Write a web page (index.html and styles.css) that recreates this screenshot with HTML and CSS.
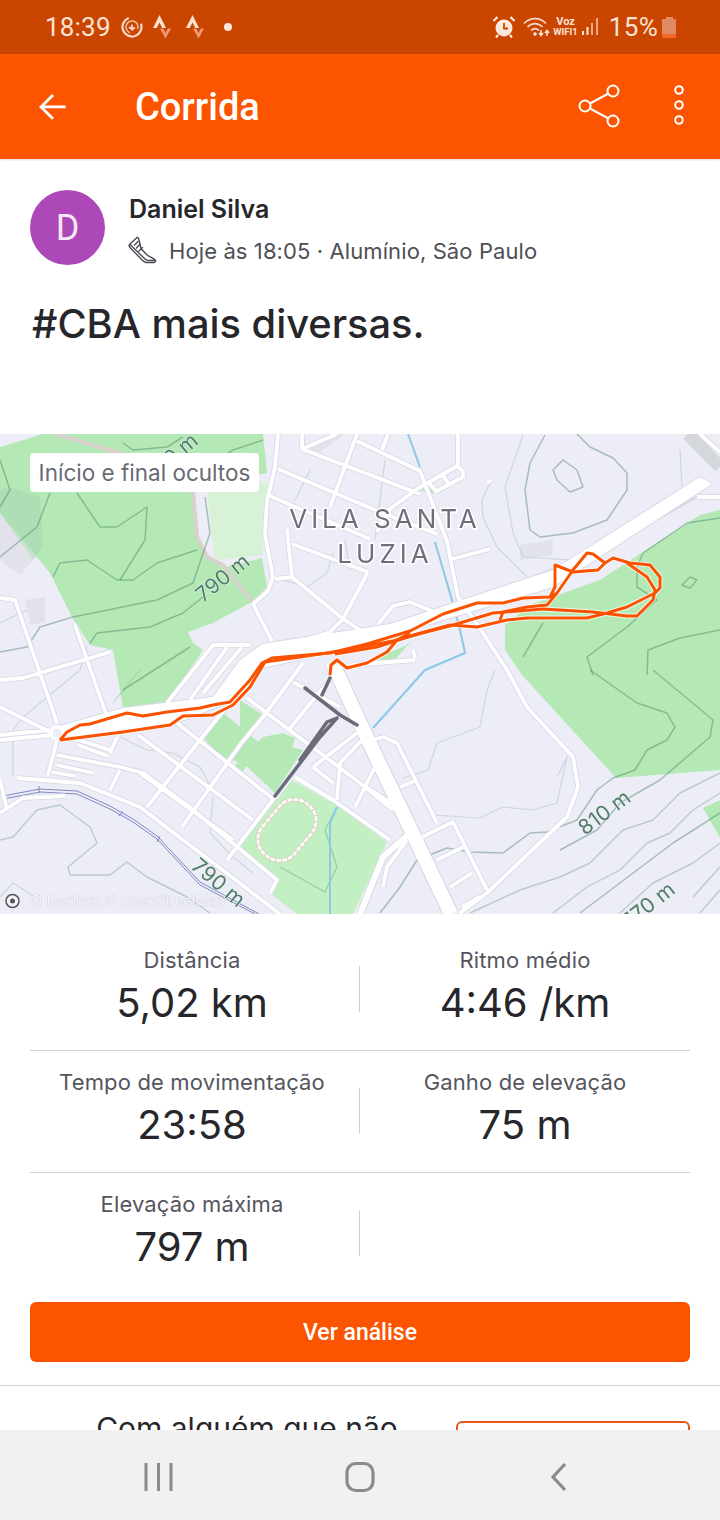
FILE: index.html
```html
<!DOCTYPE html>
<html lang="pt-BR">
<head>
<meta charset="utf-8">
<title>Corrida</title>
<link rel="stylesheet" href="styles.css">
</head>
<body>
<div class="screen">
  <div class="statusbar">
    <div class="status-left">
      <span class="clock">18:39</span>
      <svg class="st-icon" width="22" height="22" viewBox="0 0 22 22"><path d="M11 1.500a9.500 9.500 0 1 1-9.500 9.500" fill="none" stroke="#f7d8c6" stroke-width="2.200" transform="rotate(70 11 11)"/><path d="M11 5a6 6 0 1 1-6 6" fill="none" stroke="#f7d8c6" stroke-width="1.600" opacity=".8" transform="rotate(200 11 11)"/><path d="M8 11l3 2.400V8.500M11 13.400l3-2" fill="none" stroke="#f7d8c6" stroke-width="1.800"/></svg>
      <svg class="st-icon st-gap" width="18" height="24" viewBox="0 0 18 24"><path d="M0 13L6.500 0 13 13H9.300L6.500 7.500 3.700 13z" fill="#fde3d4"/><path d="M7 13.500h3.200l2.300 4.500 2.300-4.500H18l-5.500 10z" fill="#ee9a74"/></svg>
      <svg class="st-icon st-gap2" width="18" height="24" viewBox="0 0 18 24"><path d="M0 13L6.500 0 13 13H9.300L6.500 7.500 3.700 13z" fill="#fde3d4"/><path d="M7 13.500h3.200l2.300 4.500 2.300-4.500H18l-5.500 10z" fill="#ee9a74"/></svg>
      <span class="dot"></span>
    </div>
    <div class="status-right">
      <svg width="24" height="24" viewBox="0 0 24 24"><circle cx="12" cy="13" r="8.500" fill="#fde8dc"/><path d="M12 8v5.500h4" fill="none" stroke="#c94500" stroke-width="1.800"/><path d="M1.500 6l4-4M22.500 6l-4-4M6 20l-2 2.500M18 20l2 2.500" stroke="#fde8dc" stroke-width="2.200" fill="none"/></svg>
      <svg class="wifi" width="28" height="22" viewBox="0 0 28 22"><g fill="none" stroke="#f6d5c3" stroke-width="1.700"><path d="M1 7.500C7 1 17 1 23 7.500"/><path d="M4.500 11C9 6.500 15 6.500 19.500 11"/><path d="M8 14.500c2.500-2.500 5.500-2.500 8 0"/></g><circle cx="12" cy="18" r="1.800" fill="#fde8dc"/><path d="M18 14v5m-2-2l2 2.500 2-2.500M24 20v-5m-2 2l2-2.500 2 2.500" stroke="#fde8dc" stroke-width="1.500" fill="none"/></svg>
      <span class="voz"><span>Voz</span><span>WIFI1</span></span>
      <svg class="signal" width="19" height="20" viewBox="0 0 19 20"><g fill="#fde8dc"><rect x="1" y="14" width="2" height="4"/><rect x="5.500" y="10" width="2" height="8"/></g><g fill="#f2a887"><rect x="10" y="6" width="2" height="12"/><rect x="15" y="1" width="2" height="17"/></g></svg>
      <span class="pct">15%</span>
      <span class="battery"><span class="battery-cap"></span><span class="battery-body"></span></span>
    </div>
  </div>

  <header class="appbar">
    <svg class="back" width="34" height="34" viewBox="0 0 34 34"><path d="M32 17H3M17 3L3 17l14 14" fill="none" stroke="#fff" stroke-width="3.300" transform="translate(2.500 2.500) scale(.85)"/></svg>
    <h1 class="title">Corrida</h1>
    <svg class="share" width="44" height="48" viewBox="0 0 44 48"><g fill="none" stroke="#fff" stroke-width="2"><circle cx="35" cy="9" r="5.500"/><circle cx="7" cy="24" r="5.500"/><circle cx="35" cy="39" r="5.500"/><path d="M12 21.500L30.500 11.500M12 26.500L30.500 36.500"/></g></svg>
    <svg class="more" width="12" height="42" viewBox="0 0 12 42"><g fill="none" stroke="#fff" stroke-width="2"><circle cx="6" cy="6" r="3.800"/><circle cx="6" cy="21" r="3.800"/><circle cx="6" cy="36" r="3.800"/></g></svg>
  </header>

  <main class="content">
    <section class="author">
      <div class="avatar">D</div>
      <div class="author-meta">
        <div class="name">Daniel Silva</div>
        <div class="meta">
          <svg class="shoe" width="30" height="30" viewBox="0 0 30 30"><g fill="none" stroke="#4a4a52" stroke-width="1.400" stroke-linejoin="round" stroke-linecap="round"><path d="M9 1.500L2 8C1 9 1 10.500 2 11.500L14 24C15.500 25.500 17 26.500 19 26.500H26C27.500 26.500 28 25 27 24C25 21.500 21 21 18.500 18.500L13 12.500 11 4C10.500 2 10 1 9 1.500Z"/><path d="M2 8.500L17 23C18 24 20 24.500 21 24.500H27.500M10 5.500L6.500 9M12 8.500L8.500 12M14.500 11.500L11 15"/></g></svg>
          <span>Hoje às 18:05 · Alumínio, São Paulo</span>
        </div>
      </div>
    </section>
    <h2 class="activity-title">#CBA mais diversas.</h2>

    <section class="map">
      <svg class="map-svg" viewBox="0 434 720 480" width="720" height="480">
        <defs>
          <path id="minor" d="M278 434L275 467 267 501 265 534 273 577 268 591 253 604M253 604L272 641M357 441L420 471 430 497 447 541 458 597 481 630 507 670 527 707 573 757 578 787 567 817 487 893 460 913M302 434L302 449 420 494M302 449L337 434M278 469L380 512 437 534M270 496L370 539M292 544L368 572M287 529L292 577 275 579M292 577L343 619 360 630M368 572L343 619 330 632 300 642M357 434L330 507M388 434L382 450M463 471L457 466 417 489 390 509 377 532M428 482L437 492M442 474L450 486M463 477L435 492M458 434V466M463 471V477M490 549L452 559M378 624L393 606 410 602 432 611M700 434L720 452M720 497H697M0 598L15 600 57 723M75 625L107 717M0 680L23 678 110 652M0 707L50 732M0 735L50 730M0 740L53 735M57 740L48 775M17 778L80 783 140 807 280 914M57 755L120 767 143 773 187 805 277 880 270 893M57 765L93 773M52 772L75 776M120 770L110 790M117 737L110 753M72 738L110 750M78 745L108 756M138 735L253 820M177 723L272 798M247 698L360 783 397 807M140 773L233 840M147 807L200 740 240 690M303 663L263 717 240 745 182 827M275 797L227 860M167 703L213 645H250M190 700L227 647M203 693L242 647M290 728L327 683M313 767L357 733M313 767L333 783M295 777L333 800 390 840M337 800L340 763 362 740M355 807L375 767M363 743L383 737 397 743 437 823M400 787L417 780M360 783L393 810M422 837L453 822 487 890M437 860L463 847M450 887L472 873M462 907L480 897M383 887L387 867 407 840M0 813L23 798 65 796M0 780L7 810M350 665L415 660M413 650L415 658M487 483L491 480M293 682L340 707"/>
          <path id="curve" d="M360 914L383 857 410 833"/>
          <path id="major" d="M60 726L123 708 213 697 240 660 262 644 390 624 553 570 700 477 712 484 553 587 410 630 340 650 263 668 250 687 217 707 167 727 63 738Z"/>
          <path id="ns" d="M332 662L360 723 451 914"/>
          <path id="r1" d="M60 740L67 732 80 725 90 724 127 713 143 716 167 712 200 708 213 705 230 702 250 680 262 663 272 658 330 653 367 644 410 631 443 614 477 603 503 603 523 598 550 597 555 587 555 565 573 572 598 570 605 563 613 558 630 563 650 565 660 577 660 588 655 593 627 607 607 613 587 618 560 618 527 618 507 620 477 627 450 625 417 634 377 647 335 654"/>
          <path id="r2" d="M60 740L123 732 170 725 183 716 213 715 233 705 250 687 265 662 300 657 340 651 393 641 430 631 450 626 493 613 543 609 593 612 627 616 637 616 653 600 655 590 647 577 627 563"/>
          <path id="r3" d="M557 593L573 570 587 553 593 554 605 563"/>
          <path id="r4" d="M500 620L503 612 527 607 547 605 557 593 550 597"/>
          <path id="r5" d="M330 675L331 665 337 660 347 668 367 663 387 652 397 640 410 633"/>
        </defs>
        <rect x="0" y="434" width="720" height="480" fill="#ecedf6"/>
        <g class="shade">
          <path d="M0 513L33 560 20 575 0 560z"/>
          <path d="M520 545L553 540 552 555 520 560z"/>
          <path d="M25 600L45 597 45 622 30 625z"/>
          <path d="M302 449L337 434H345L320 452z"/>
        </g>
        <g class="green">
          <path d="M0 447L43 434H263L267 473 258 475 205 480 193 492 197 537 207 557 223 568 262 558 267 587 252 602 213 623 188 632 193 643 203 650 167 703 123 708 113 650 90 645 72 617 50 573 0 513Z"/>
          <path d="M720 510L700 515 600 580 530 605 505 625 505 650 522 675 616 778 720 770z"/>
          <path d="M703 808L720 800V838z"/>
          <path d="M240 743L263 715 240 700z"/>
          <path d="M203 738L222 712 262 745 240 775z"/>
          <path d="M240 760L263 737 283 733 295 738 292 747 303 750 275 793z"/>
          <path d="M370 660L405 646 412 640 395 660zM420 490L430 480 434 494z"/>
        </g>
        <path class="green-pale" d="M292 780L333 803 387 842 353 914H297L270 893 278 880 240 847z"/>
        <path class="green-light" d="M207 494L220 487 267 482 262 555 215 560z"/>
        <path class="green-dark" d="M10 487L40 497 43 547 33 560 0 513V490z"/>
        <path class="notch" d="M215 755L238 762 232 770 215 762z"/>
        <path d="M55 434L120 453 193 492 197 537 207 557 223 565 252 602" class="path-tan"/>
        <path d="M688 434L720 467" class="grey-road"/>
        <path class="side" d="M720 497H697L620 540 480 600 400 625"/>

        <g class="contour">
          <path d="M545 435L530 463 525 490 530 530 540 537 573 533 607 520 627 490 627 473 613 458 590 447 577 434"/>
          <path d="M553 470L563 460 577 470 583 487 570 492 557 480Z"/>
          <path d="M690 577L697 580 690 588 682 585Z"/>
          <path d="M720 518L687 523 643 553 637 567 637 587 657 600 627 627 587 657 593 675"/>
          <path d="M647 675L648 650 680 638 720 630M543 623L523 657"/>
          <path d="M0 652L27 647 40 627 73 617 157 600 193 583 210 533 205 497"/>
          <path d="M90 643L97 633 150 627 183 613 203 597"/>
          <path d="M53 577L60 563 87 560 117 580 133 580 157 563 197 550"/>
          <path d="M50 493L37 527 0 557M0 460L10 490 0 507M77 493L100 527 117 527 147 507 145 540 120 580M123 443L133 450 167 447 183 437M213 463L233 450 263 440M123 690L190 647"/>
          <path d="M590 670L637 703 667 713 675 727 667 740 647 750 635 770 613 778 597 790 577 820 547 832 530 833 503 853 470 852 447 848 417 860 400 887 380 913"/>
          <path d="M653 670L713 720 710 737 660 780 620 803 597 830 560 850"/>
          <path d="M720 813L673 843 580 913"/>
          <path class="contour-soft" d="M720 773L680 793 653 820 623 830 590 863 560 877 520 890 470 913M720 793L693 810 670 833 647 843 620 870 587 887 553 913M720 843L693 863 653 883 620 913M720 867L693 897M720 890L700 913"/>
          <path class="contour-soft" d="M0 840L13 837 37 810 60 805 90 827 97 843 68 867 70 875 110 875 127 862 147 877 187 897 210 913"/>
          <path class="contour-soft" d="M337 807L325 830 337 867 325 892 280 867"/>
          <path class="contour-faint" d="M523 435L505 487 513 533 523 557 573 560M490 483L482 500 483 517 497 547 527 577M680 450L682 487M495 670L487 690 480 727 437 743 428 770 403 778M557 777L567 757 557 803 533 810 503 807 480 818 433 815M333 553L327 573 307 587 283 580M13 777V730L23 717 80 670 87 647M0 623L27 610M120 737L147 750 173 753 200 767 213 790M0 897L13 883 40 900M213 797L210 833 233 857 253 873M113 703L140 670M345 540L350 570M310 470L295 500M385 460L375 540"/>
        </g>
        <path class="water" d="M408 434L420 467M435 542L452 600 460 630 465 653 425 670 373 728M337 807L330 823V914"/>
        <g class="rail">
          <path d="M3 799L40 792 77 794 110 809 133 822 157 839 200 885 255 914"/>
          <path d="M3 796L40 789 77 791 110 806 133 819 157 836 200 882 259 914"/>
          <path d="M39 786V793M119 816L123 811M157 842L160 836"/>
        </g>
        <use href="#minor" class="road-case"/>
        <use href="#curve" class="curve-case"/>
        <use href="#major" class="major-case"/>
        <use href="#ns" class="ns-case"/>
        <use href="#minor" class="road"/>
        <use href="#curve" class="curve"/>
        <use href="#ns" class="ns"/>
        <use href="#major" class="major"/>
        <circle cx="57" cy="733" r="6" fill="#ecedf6" stroke="#fff" stroke-width="3"/>
        <rect x="254" y="809" width="66" height="42" rx="20" transform="rotate(-50 287 830)" class="track-base"/>
        <rect x="254" y="809" width="66" height="42" rx="20" transform="rotate(-50 287 830)" class="track"/>
        <path class="route-dark" d="M330 678L322 695M305 688L340 715 357 725M337 718L320 737 275 796M337 718L327 722 300 760"/>

        <g class="route-case">
          <use href="#r1"/><use href="#r2"/><use href="#r3"/><use href="#r4"/><use href="#r5"/>
        </g>
        <g class="route">
          <use href="#r1"/><use href="#r2"/><use href="#r3"/><use href="#r4"/><use href="#r5"/>
        </g>

        <text class="place" x="385" y="528" text-anchor="middle">VILA SANTA</text>
        <text class="place" x="385" y="563" text-anchor="middle">LUZIA</text>
        <text class="elev" transform="translate(203 603) rotate(-39)">790 m</text>
        <text class="elev" transform="translate(152 483) rotate(-40)">790 m</text>
        <text class="elev" transform="translate(190 868) rotate(40)">790 m</text>
        <text class="elev" transform="translate(585 836) rotate(-37)">810 m</text>
        <text class="elev" transform="translate(628 930) rotate(-38)">770 m</text>
        <circle cx="12.500" cy="901" r="6.500" fill="#f3f3f6" stroke="#55555c" stroke-width="1.500"/>
        <circle cx="12.500" cy="901" r="2.500" fill="#55555c"/>
        <text class="attrib" x="30" y="906">© Mapbox © OpenStreetMap</text>
      </svg>
      <div class="map-tag">Início e final ocultos</div>
    </section>

    <section class="stats">
      <div class="stat-row">
        <div class="stat stat-left"><div class="stat-label">Distância</div><div class="stat-value">5,02 km</div></div>
        <div class="stat-sep"></div>
        <div class="stat"><div class="stat-label">Ritmo médio</div><div class="stat-value">4:46 /km</div></div>
      </div>
      <div class="stat-row">
        <div class="stat stat-left"><div class="stat-label">Tempo de movimentação</div><div class="stat-value">23:58</div></div>
        <div class="stat-sep"></div>
        <div class="stat"><div class="stat-label">Ganho de elevação</div><div class="stat-value">75 m</div></div>
      </div>
      <div class="stat-row stat-row-last">
        <div class="stat stat-left"><div class="stat-label">Elevação máxima</div><div class="stat-value">797 m</div></div>
        <div class="stat-sep"></div>
        <div class="stat"></div>
      </div>
    </section>

    <div class="cta-wrap"><button class="cta">Ver análise</button></div>
    <div class="invite">
      <div class="invite-text">Com alguém que não</div>
      <div class="invite-btn"></div>
    </div>
  </main>

  <nav class="navbar">
    <svg width="31" height="30" viewBox="0 0 31 30"><path d="M3 1v28M15.500 1v28M28 1v28" stroke="#8b8b8b" stroke-width="3" fill="none"/></svg>
    <svg class="nav-home" width="30" height="32" viewBox="0 0 30 32"><rect x="2" y="2.500" width="26" height="27" rx="9" fill="none" stroke="#8b8b8b" stroke-width="3.200"/></svg>
    <svg width="20" height="30" viewBox="0 0 20 30"><path d="M16 2L4 15l12 13" fill="none" stroke="#8b8b8b" stroke-width="3.200"/></svg>
  </nav>
</div>
</body>
</html>
```
FILE: styles.css
```css
* { box-sizing: border-box; }
html, body { margin: 0; padding: 0; background: #fff; }
body { font-family: "Inter", "Liberation Sans", sans-serif; color: #26262b; }
.screen { width: 720px; height: 1520px; display: flex; flex-direction: column; overflow: hidden; }

.statusbar { height: 54px; flex: none; background: #c94500; display: flex; justify-content: space-between; align-items: center; padding: 0 44px 0 45px; color: #fde3d4; font-family: "Roboto", sans-serif; }
.status-left, .status-right { display: flex; align-items: center; }
.clock { font-size: 26px; letter-spacing: .2px; margin-right: 10px; }
.st-gap { margin-left: 10px; }
.st-gap2 { margin-left: 15px; }
.dot { width: 8px; height: 8px; border-radius: 50%; background: #fde8dc; margin-left: 20px; margin-top: -1px; }
.wifi { margin-left: 7px; }
.voz { display: flex; flex-direction: column; align-items: center; font-weight: 700; line-height: 10px; margin-left: 2px; }
.voz span:first-child { font-size: 11px; }
.voz span:last-child { font-size: 9.500px; }
.signal { margin-left: 3px; }
.pct { font-size: 26px; margin-left: 9px; letter-spacing: .3px; }
.battery { width: 14px; height: 21px; display: flex; flex-direction: column; align-items: center; margin-left: 4px; }
.battery-cap { width: 7px; height: 2px; background: #e38d68; }
.battery-body { width: 14px; height: 19px; background: linear-gradient(#e08a64 0 80%, #f4672a 80%); border-radius: 1px; }

.appbar { height: 105px; flex: none; background: #fc5400; display: flex; align-items: center; padding: 0 35px 0 36px; box-shadow: 0 1px 2px rgba(0,0,0,.15); position: relative; }
.back { flex: none; }
.title { margin: 0 0 0 65px; flex: 1; font-family: "Roboto", sans-serif; font-weight: 500; font-size: 38px; color: #fff; }
.share { flex: none; margin: -2px 51px 0 0; }
.more { flex: none; margin-top: -3px; }

.content { flex: 1; min-height: 0; overflow: hidden; }

.author { display: flex; padding: 31px 30px 0; height: 124px; }
.avatar { width: 75px; height: 75px; border-radius: 50%; background: #ad48b8; color: #f6e6f7; font-family: "Roboto", sans-serif; font-size: 36px; display: flex; align-items: center; justify-content: center; flex: none; }
.author-meta { margin-left: 24px; }
.name { font-size: 25px; font-weight: 600; line-height: 36px; margin-top: 1px; color: #26262b; }
.meta { display: flex; align-items: center; margin-top: 6px; font-size: 22px; letter-spacing: .1px; color: #4f4f58; line-height: 36px; }
.shoe { margin-right: 11px; flex: none; margin-left: -1px; }
.activity-title { margin: 0; padding: 16px 32px 0; font-size: 39.800px; font-weight: 500; line-height: 50px; height: 151px; color: #26262b; }

.map { position: relative; height: 480px; overflow: hidden; }
.map-svg { display: block; filter: blur(.45px); }
.map-tag { position: absolute; left: 30px; top: 19px; height: 39px; width: 229px; background: #fff; border-radius: 4px; color: #6a6a74; font-size: 22.500px; line-height: 39px; text-align: center; white-space: nowrap; }

.shade path { fill: #e2e3ea; }
.green path { fill: #b4e9b6; }
.green-pale { fill: #c3f0c3; }
.green-light { fill: #d7f2d6; }
.green-dark { fill: #a9d6b0; opacity: .55; }
.notch { fill: #ecedf6; }
.path-tan { fill: none; stroke: #d9d2cc; stroke-width: 4; }
.grey-road { fill: none; stroke: #d4d8dc; stroke-width: 13; }
.side { fill: none; stroke: #d3d5e3; stroke-width: 2; }
.contour path { fill: none; stroke: rgba(70,125,100,.42); stroke-width: 1.500; stroke-linejoin: round; }
.contour .contour-soft { stroke: rgba(70,125,100,.3); stroke-width: 1.400; }
.contour .contour-faint { stroke: rgba(110,130,140,.22); stroke-width: 1.200; }
.water { fill: none; stroke: #8cc8e8; stroke-width: 2; stroke-linejoin: round; }
.rail path { fill: none; stroke: #8088c4; stroke-width: 1; }
.road-case { fill: none; stroke: #d7d9e6; stroke-width: 5.500; stroke-linejoin: round; }
.road { fill: none; stroke: #fff; stroke-width: 3.800; stroke-linejoin: round; }
.curve-case { fill: none; stroke: #d7d9e6; stroke-width: 8; }
.curve { fill: none; stroke: #fff; stroke-width: 6; }
.major-case { fill: #d7d9e6; stroke: #d7d9e6; stroke-width: 2; stroke-linejoin: round; }
.major { fill: #fff; stroke: none; }
.ns-case { fill: none; stroke: #d3d5e3; stroke-width: 16; }
.ns { fill: none; stroke: #fff; stroke-width: 14; }
.track-base { fill: none; stroke: #d4cfc0; stroke-width: 4.500; }
.track { fill: none; stroke: #fbfaf4; stroke-width: 3; stroke-dasharray: 5 1; }
.route-dark { fill: none; stroke: #6c6c78; stroke-width: 3.500; stroke-linecap: round; stroke-linejoin: round; }
.route-case use { fill: none; stroke: #fff; stroke-width: 5; stroke-opacity: .7; stroke-linejoin: round; }
.route use { fill: none; stroke: #fc5200; stroke-width: 3; stroke-linejoin: round; }
.place { font-family: "Inter", sans-serif; font-size: 26px; font-weight: 400; letter-spacing: 4px; fill: #6f6f7a; stroke: #fff; stroke-width: 3px; paint-order: stroke; }
.elev { font-family: "Inter", sans-serif; font-size: 21px; fill: #527d68; stroke: #eef2f0; stroke-width: 1px; paint-order: stroke; }
.attrib { font-family: "Inter", sans-serif; font-size: 14px; fill: #f4f4f8; stroke: #cfd1de; stroke-width: .8px; paint-order: stroke; }

.stats { padding: 15px 30px 0; }
.stat-row { height: 122px; display: flex; align-items: flex-start; border-bottom: 1px solid #cfcfd3; padding-top: 18px; }
.stat-row-last { border-bottom: 0; height: 129px; }
.stat { flex: 1; text-align: center; }
.stat-left { flex: 0 0 324px; }
.stat-label { font-size: 22px; line-height: 26px; letter-spacing: .15px; color: #55555e; white-space: nowrap; }
.stat-value { font-size: 40px; line-height: 50px; margin-top: 5px; color: #26262b; }
.stat-sep { width: 1px; height: 46px; background: #cfcfd3; flex: none; margin: 19px 0 0 5px; }

.cta-wrap { padding: 0 30px 23px; border-bottom: 1px solid #cfcfd3; }
.cta { display: block; width: 100%; height: 60px; border: 0; border-radius: 6px; background: #fc5400; color: #fff; font-family: "Roboto", sans-serif; font-size: 23px; font-weight: 500; }

.invite { display: flex; padding: 24px 30px 0 38px; height: 60px; }
.invite-text { width: 418px; text-align: center; font-size: 30px; line-height: 36px; color: #26262b; white-space: nowrap; }
.invite-btn { width: 234px; height: 60px; border: 2px solid #e9581a; border-radius: 6px; margin-top: 11px; }

.navbar { height: 90px; flex: none; background: #f1f1f1; display: flex; align-items: center; padding: 4px 151px 0 143px; justify-content: space-between; }
.nav-home { margin-right: 4px; }
```
